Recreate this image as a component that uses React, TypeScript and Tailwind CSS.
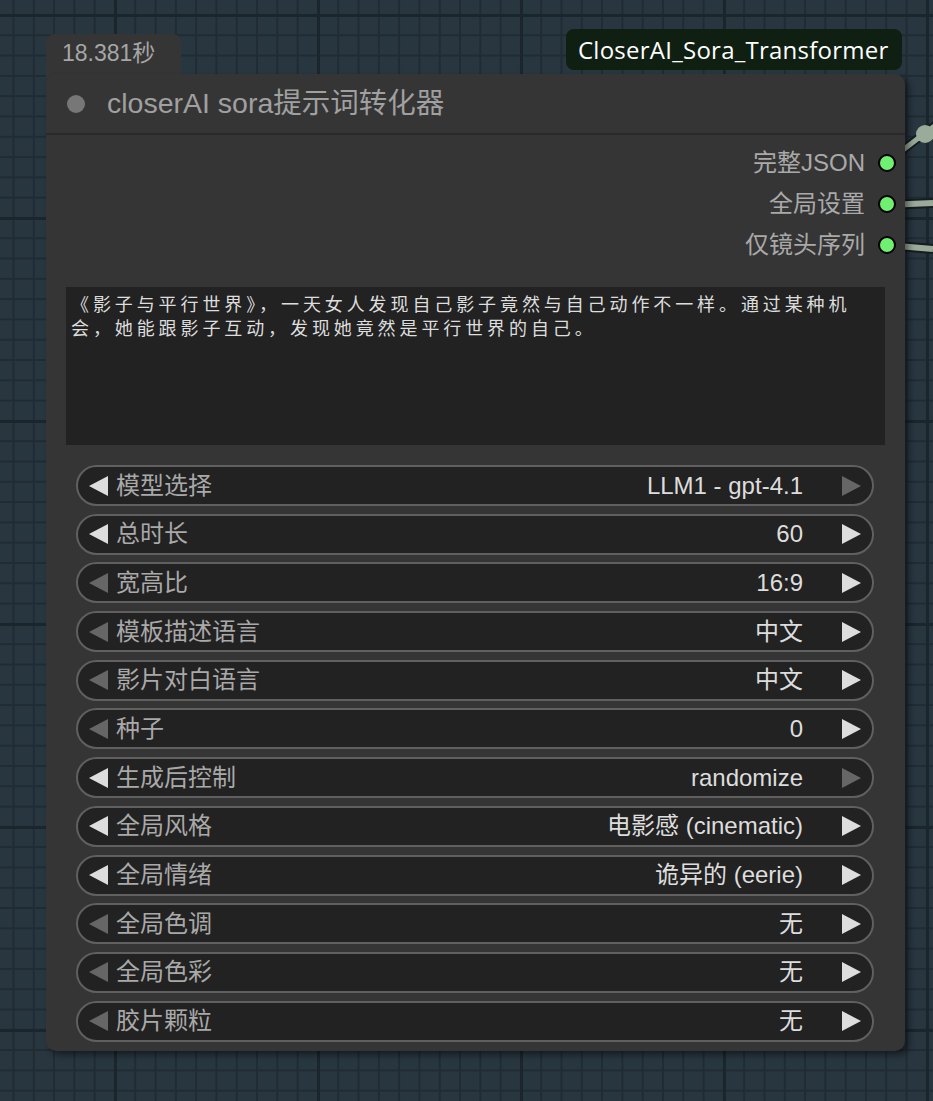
import React from 'react';

type Widget = {
  label: string;
  value: string;
  left: boolean; // left arrow active
  right: boolean; // right arrow active
};

const widgets: Widget[] = [
  { label: '模型选择', value: 'LLM1 - gpt-4.1', left: true, right: false },
  { label: '总时长', value: '60', left: true, right: true },
  { label: '宽高比', value: '16:9', left: false, right: true },
  { label: '模板描述语言', value: '中文', left: false, right: true },
  { label: '影片对白语言', value: '中文', left: false, right: true },
  { label: '种子', value: '0', left: false, right: true },
  { label: '生成后控制', value: 'randomize', left: true, right: false },
  { label: '全局风格', value: '电影感 (cinematic)', left: true, right: true },
  { label: '全局情绪', value: '诡异的 (eerie)', left: true, right: true },
  { label: '全局色调', value: '无', left: false, right: true },
  { label: '全局色彩', value: '无', left: false, right: true },
  { label: '胶片颗粒', value: '无', left: false, right: true },
];

const outputs = ['完整JSON', '全局设置', '仅镜头序列'];

const Arrow: React.FC<{ dir: 'left' | 'right'; active: boolean }> = ({ dir, active }) => (
  <svg width="19" height="20" viewBox="0 0 19 20" className="shrink-0">
    <polygon
      points={dir === 'left' ? '19,0 19,20 0,10' : '0,0 0,20 19,10'}
      fill={active ? '#dddddd' : '#666666'}
    />
  </svg>
);

const WidgetRow: React.FC<{ w: Widget }> = ({ w }) => (
  <div className="flex h-[41px] items-center rounded-full border-2 border-[#606060] bg-[#222222] pl-[11px] pr-[11px]">
    <Arrow dir="left" active={w.left} />
    <span className="ml-[8px] text-[24px] leading-none text-[#a9a9a9]">{w.label}</span>
    <span className="ml-auto text-[24px] leading-none text-[#dddddd]">{w.value}</span>
    <div className="ml-[39px]">
      <Arrow dir="right" active={w.right} />
    </div>
  </div>
);

export default function App() {
  return (
    <div
      className="relative h-[1101px] w-full overflow-hidden bg-[#283640] bg-[linear-gradient(to_right,#1b252c_3px,transparent_3px),linear-gradient(to_bottom,#1b252c_3px,transparent_3px),linear-gradient(to_right,#202b33_2px,transparent_2px),linear-gradient(to_bottom,#202b33_2px,transparent_2px)] bg-[size:203px_203px,203px_203px,20.3px_20.3px,20.3px_20.3px] bg-[position:114px_14px,114px_14px,114px_14px,114px_14px] font-['Liberation_Sans','Noto_Sans_CJK_SC',sans-serif]"
    >
      {/* links leaving the outputs */}
      <svg className="pointer-events-none absolute left-0 top-0" width="933" height="1101">
        <path d="M886 163 L925 133 L945 118" stroke="#161c20" strokeWidth="9" fill="none" />
        <path d="M886 163 L925 133 L945 118" stroke="#9aab9a" strokeWidth="5" fill="none" />
        <circle cx="925" cy="134" r="9" fill="#9aab9a" />
        <path d="M886 205 L933 203" stroke="#161c20" strokeWidth="10" fill="none" />
        <path d="M886 205 L933 203" stroke="#9aab9a" strokeWidth="6" fill="none" />
        <path d="M886 245 L933 249" stroke="#161c20" strokeWidth="10" fill="none" />
        <path d="M886 245 L933 249" stroke="#9aab9a" strokeWidth="6" fill="none" />
      </svg>

      {/* execution time badge */}
      <div className="absolute left-[46px] top-[34px] flex h-[44px] w-[135px] items-start rounded-t-[8px] bg-[#353535] pl-[16px] pt-[4px]">
        <span className="text-[23px] leading-[30px] text-[#a6a6a6]">18.381秒</span>
      </div>

      {/* node class badge */}
      <div className="absolute left-[566px] top-[29px] flex h-[41px] items-center rounded-[8px] bg-[#0f1f12] pl-[12px] pr-[13px]">
        <span className="font-['Open_Sans',sans-serif] text-[24px] leading-none tracking-[0.25px] text-white">CloserAI_Sora_Transformer</span>
      </div>

      {/* node */}
      <div className="absolute left-[46px] top-[74px] flex w-[859px] flex-col rounded-[10px] bg-[#353535] pb-[9px] shadow-[4px_4px_6px_rgba(0,0,0,0.45)]">
        <div className="flex h-[61px] items-center border-b-2 border-[#2a2a2a] pl-[21px]">
          <div className="h-[18px] w-[18px] rounded-full bg-[#777777]" />
          <span className="ml-[22px] text-[28.5px] leading-none text-[#a0a0a0]">closerAI sora提示词转化器</span>
        </div>

        <div className="flex flex-col items-end pr-[9px] pt-[7px]">
          {outputs.map(o => (
            <div key={o} className="flex h-[41px] items-center">
              <span className="text-[24px] leading-none text-[#a9a9a9]">{o}</span>
              <div className="ml-[13px] h-[18px] w-[18px] rounded-full border-2 border-black bg-[#70f070]" />
            </div>
          ))}
        </div>

        <div className="mx-[20px] mt-[22px] h-[158px] bg-[#222222] px-[5px] pt-[4px] font-['Noto_Sans_CJK_SC',serif] text-[18px] leading-[24px] tracking-[3.9px] text-[#dddddd]">
          <div className="whitespace-nowrap">《影子与平行世界》，一天女人发现自己影子竟然与自己动作不一样。通过某种机</div>
          <div className="whitespace-nowrap">会，她能跟影子互动，发现她竟然是平行世界的自己。</div>
        </div>

        <div className="mt-[20px] flex flex-col gap-[7.7px] pl-[30px] pr-[31px]">
          {widgets.map(w => (
            <WidgetRow key={w.label} w={w} />
          ))}
        </div>
      </div>
    </div>
  );
}
